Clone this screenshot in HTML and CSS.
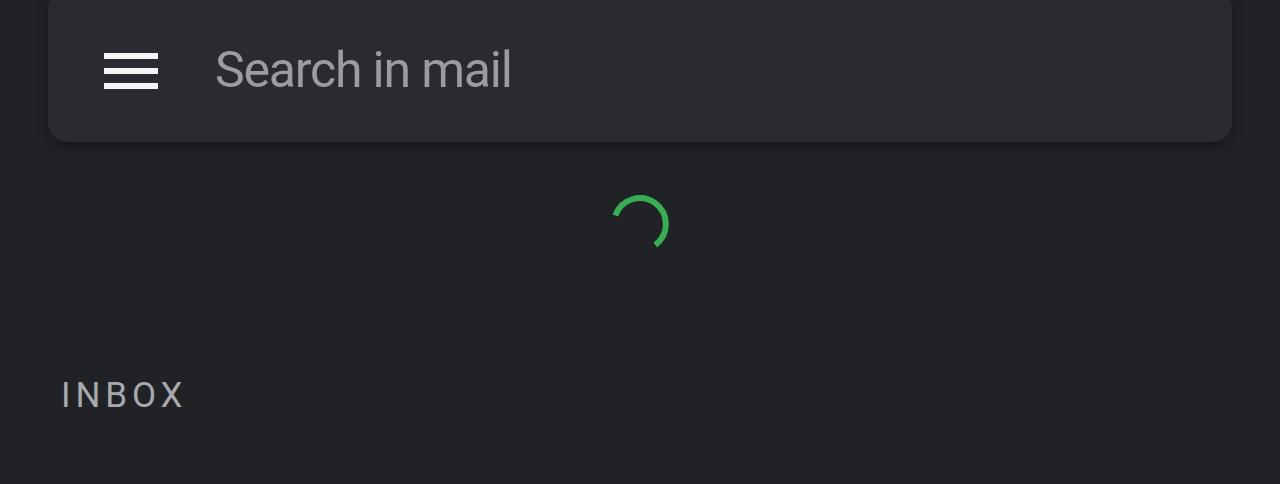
FILE: index.html
```html
<!DOCTYPE html>
<html>
<head>
<meta charset="utf-8">
<link rel="stylesheet" href="styles.css">
</head>
<body>
<div class="page">
  <div class="search-bar">
    <div class="menu-icon">
      <span></span><span></span><span></span>
    </div>
    <div class="placeholder">Search in mail</div>
  </div>
  <div class="loader">
    <svg width="64" height="64" viewBox="0 0 64 64">
      <path d="M 7.3 23.5 A 26 26 0 1 1 47.3 53" fill="none" stroke="#37ad55" stroke-width="6"/>
    </svg>
  </div>
  <div class="section-label">INBOX</div>
</div>
</body>
</html>
```
FILE: styles.css
```css
html, body {
  margin: 0;
  padding: 0;
  background: #212226;
  height: 100%;
  overflow: hidden;
}
.page {
  padding: 0 48px;
  font-family: Roboto, "Open Sans", sans-serif;
}
.search-bar {
  margin-top: -10px;
  height: 152px;
  background: #2a2b30;
  border-radius: 20px;
  box-shadow: 0 4px 12px rgba(0,0,0,0.35);
  display: flex;
  align-items: center;
  padding: 10px 0 0 56px;
  box-sizing: border-box;
}
.menu-icon {
  width: 54px;
  display: flex;
  flex-direction: column;
  gap: 9px;
  margin-top: 0;
}
.menu-icon span {
  display: block;
  height: 6px;
  background: #f4f4f6;
}
.placeholder {
  margin-left: 57px;
  font-size: 50px;
  letter-spacing: -1.2px;
  color: #9b9ca1;
  margin-top: -2px;
}
.loader {
  display: flex;
  justify-content: center;
  padding-top: 50px;
  height: 100px;
}
.section-label {
  margin-top: 86px;
  margin-left: 13px;
  font-size: 35px;
  letter-spacing: 4.9px;
  color: #a8a9ae;
  line-height: 1;
}
```
